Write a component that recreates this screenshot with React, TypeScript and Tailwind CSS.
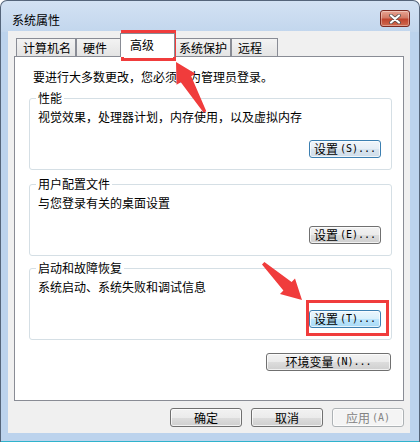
import React from "react"

const cjk = "font-['Noto_Sans_CJK_SC',sans-serif]"

type Variant = "normal" | "focus" | "hover" | "disabled"

function Btn({ zh, en, variant = "normal", className = "" }: { zh: string; en?: string; variant?: Variant; className?: string }) {
  const look =
    variant === "hover"
      ? "border-[#3c7fb1] bg-[linear-gradient(#eaf6fd_0%,#d9f0fc_50%,#bee6fd_50%,#a7d9f5_100%)] text-black"
      : variant === "focus"
        ? "border-[#3c7fb1] bg-[linear-gradient(#f0f5fa_0%,#e6eef6_50%,#d9e5f0_50%,#cfdde9_100%)] text-black"
        : variant === "disabled"
          ? "border-[#adb2b5] bg-[#f4f4f4] text-[#838383]"
          : "border-[#707070] bg-[linear-gradient(#f2f2f2_0%,#ebebeb_50%,#dddddd_50%,#cfcfcf_100%)] text-black"
  return (
    <div
      className={`flex items-center justify-center rounded-[3px] border shadow-[inset_0_0_0_1px_rgba(255,255,255,0.7)] ${look} ${className}`}
    >
      <span className={`${cjk} text-[12px] leading-[14px]`}>{zh}</span>
      {en && <span className="ml-[2px] font-['DejaVu_Sans_Mono',monospace] text-[10px] leading-[14px]">{en}</span>}
    </div>
  )
}

function Group({ title, text, btn, variant }: { title: string; text: string; btn: string; variant?: Variant }) {
  return (
    <div className="relative flex h-[72px] flex-col rounded-[3px] border border-[#d5dfe5] pl-[8px] pt-[11px]">
      {/* legend sits on the border */}
      <span className={`absolute -top-[8px] left-[6px] bg-white px-[2px] ${cjk} text-[12px] leading-[14px] text-black`}>
        {title}
      </span>
      <p className={`${cjk} text-[12px] leading-[14px] text-black`}>{text}</p>
      <Btn zh="设置" en={btn} variant={variant} className="mr-[10px] mt-[16px] h-[18px] w-[72px] self-end" />
    </div>
  )
}

function Tab({ label, className = "" }: { label: string; className?: string }) {
  return (
    <div
      className={`flex h-[19px] items-center border border-b-0 border-[#898c95] bg-[linear-gradient(#f3f3f3,#e3e3e3)] ${cjk} text-[12px] leading-[14px] text-black ${className}`}
    >
      {label}
    </div>
  )
}

export default function App() {
  return (
    <div className="relative flex h-[442px] w-[420px] flex-col overflow-hidden rounded-t-[7px] border border-b-0 border-[#55657a] bg-[linear-gradient(#d3e2f3_0px,#c2d6ed_31px,#bcd3ed_31px,#bcd3ed_100%)]">
      {/* title bar */}
      <div className="flex h-[30px] shrink-0 items-start justify-between pl-[11px] pr-[9px]">
        <span className={`mt-[12px] ${cjk} text-[12px] leading-[14px] text-black`}>系统属性</span>
        <div className="mt-[9px] flex h-[17px] w-[30px] items-center justify-center rounded-[3px] border border-[#7b2a22] bg-[linear-gradient(#e8a493_0%,#d27a66_45%,#c0442e_55%,#cf6b50_100%)] shadow-[inset_0_0_0_1px_rgba(255,255,255,0.35)]">
          <svg width="12" height="10" viewBox="0 0 12 10">
            <path d="M2 1.5 L10 8.5 M10 1.5 L2 8.5" stroke="#4a4a4a" strokeWidth="3.6" strokeLinecap="round" />
            <path d="M2 1.5 L10 8.5 M10 1.5 L2 8.5" stroke="#ffffff" strokeWidth="2.2" strokeLinecap="round" />
          </svg>
        </div>
      </div>

      {/* client area */}
      <div className="ml-[7px] mr-[9px] flex flex-col bg-[#f0f0f0] px-[6px] pb-[6px] pt-[2px]">
        {/* tabs */}
        <div className="flex h-[24px] items-end pl-[2px]">
          <Tab label="计算机名" className="w-[60px] pl-[6px]" />
          <Tab label="硬件" className="w-[45px] pl-[6px]" />
          <div
            className={`relative z-10 -ml-px h-[24px] w-[55px] border border-b-0 border-[#898c95] bg-white pl-[9px] pt-[4px] ${cjk} text-[12px] leading-[14px] text-black`}
          >
            高级
          </div>
          <Tab label="系统保护" className="w-[56px] pl-[3px]" />
          <Tab label="远程" className="w-[47px] pl-[6px]" />
        </div>

        {/* tab panel */}
        <div className="-mt-px flex h-[345px] flex-col border border-[#898c95] bg-white pl-[14px] pr-[11px] pt-[13px]">
          <p className={`pl-[4px] ${cjk} text-[12px] leading-[14px] text-black`}>要进行大多数更改，您必须作为管理员登录。</p>
          <div className="mt-[14px]">
            <Group title="性能" text="视觉效果，处理器计划，内存使用，以及虚拟内存" btn="(S)..." variant="focus" />
          </div>
          <div className="mt-[14px]">
            <Group title="用户配置文件" text="与您登录有关的桌面设置" btn="(E)..." />
          </div>
          <div className="mt-[12px]">
            <Group title="启动和故障恢复" text="系统启动、系统失败和调试信息" btn="(T)..." variant="hover" />
          </div>
          <Btn zh="环境变量" en="(N)..." className="mr-[1px] mt-[13px] h-[18px] w-[125px] self-end" />
        </div>

        {/* dialog buttons */}
        <div className="mt-[7px] flex justify-end gap-[9px]">
          <Btn zh="确定" className="h-[19px] w-[72px]" />
          <Btn zh="取消" className="h-[19px] w-[72px]" />
          <Btn zh="应用" en="(A)" variant="disabled" className="h-[19px] w-[72px]" />
        </div>
      </div>
      <div className="mt-auto h-px bg-[#2fb3cc]" />

      {/* red annotations */}
      <svg className="pointer-events-none absolute -left-px -top-px" width="420" height="442" viewBox="0 0 420 442">
        <rect x="122.5" y="31.5" width="52" height="28" fill="none" stroke="#f03c3c" strokeWidth="3" />
        <rect x="307.5" y="301.5" width="80" height="33" fill="none" stroke="#f03c3c" strokeWidth="3" />
        <polygon
          points="176,62 195.5,73.7 191.2,76.2 206.3,111.3 203.7,112.7 180.8,82.2 176.5,84.7"
          fill="#f03c3c"
        />
        <polygon
          points="302,300 280,294 283.4,290.5 262,264.4 264.4,262 291.6,281.9 295,278.5"
          fill="#f03c3c"
        />
      </svg>
    </div>
  )
}
